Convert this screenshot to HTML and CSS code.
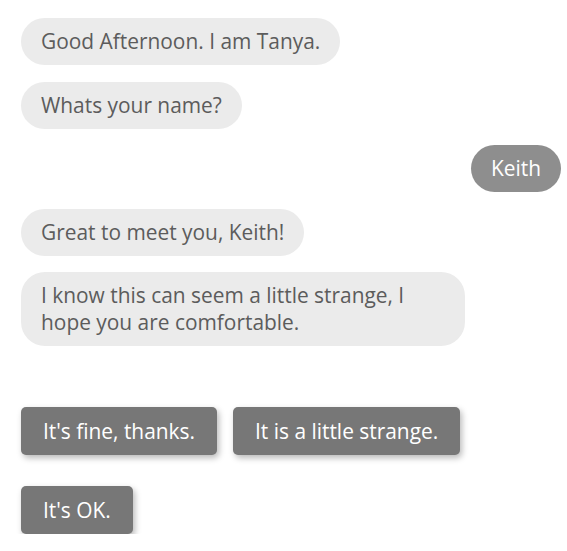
FILE: index.html
```html
<!DOCTYPE html>
<html>
<head>
<meta charset="utf-8">
<link rel="stylesheet" href="styles.css">
</head>
<body>
<div class="chat">
  <div class="msg bot">Good Afternoon. I am Tanya.</div>
  <div class="msg bot">Whats your name?</div>
  <div class="msg user">Keith</div>
  <div class="msg bot">Great to meet you, Keith!</div>
  <div class="msg bot">I know this can seem a little strange, I hope you are comfortable.</div>
</div>
<div class="choices">
  <button class="choice">It's fine, thanks.</button>
  <button class="choice">It is a little strange.</button>
  <button class="choice">It's OK.</button>
</div>
</body>
</html>
```
FILE: styles.css
```css
html, body {
  margin: 0;
  padding: 0;
  background: #fff;
}
body {
  font-family: "Open Sans", "Liberation Sans", sans-serif;
  font-size: 20.9px;
  line-height: 27px;
  padding: 18px 6px 0 21px;
}
.chat {
  display: flex;
  flex-direction: column;
  align-items: flex-start;
  gap: 16.5px;
}
.msg {
  border-radius: 24px;
  padding: 10px 20px;
  max-width: 404px;
}
.bot {
  background: #ebebeb;
  color: #5c5c5c;
}
.user {
  align-self: flex-end;
  background: #8e8e8e;
  color: #fff;
}
.choices {
  margin-top: 61px;
  display: flex;
  flex-wrap: wrap;
  column-gap: 16px;
  row-gap: 31px;
  max-width: 460px;
}
.choice {
  font: inherit;
  line-height: 27px;
  border: none;
  background: #777777;
  color: #fff;
  border-radius: 5px;
  padding: 10.5px 22px;
  box-shadow: 2px 3px 6px rgba(0,0,0,0.28);
}
```
